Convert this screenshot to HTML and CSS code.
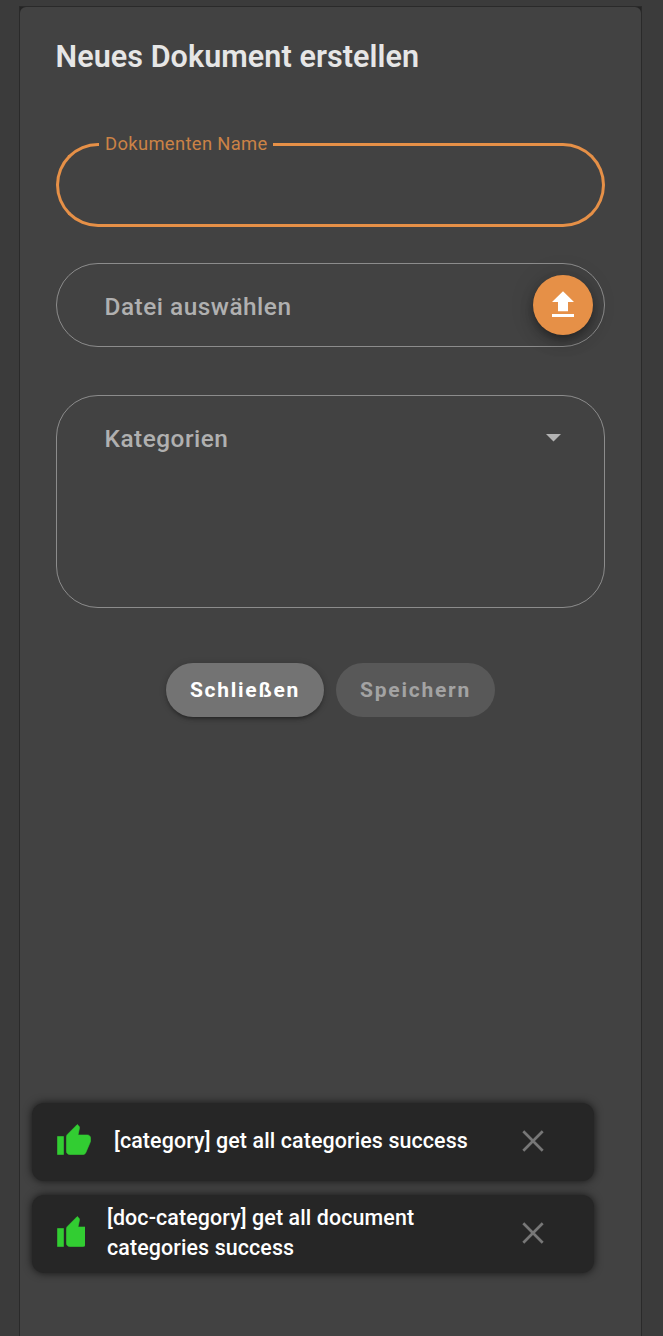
FILE: index.html
```html
<!DOCTYPE html>
<html lang="de">
<head>
<meta charset="utf-8">
<title>Neues Dokument erstellen</title>
<link rel="stylesheet" href="styles.css">
</head>
<body>
<main class="dialog">
  <div class="surface">
    <h1 class="title">Neues Dokument erstellen</h1>
    <div class="field field-focused">
      <span class="outline-start"></span>
      <label class="notch" for="name"><span class="notch-text">Dokumenten Name</span></label>
      <span class="outline-end"></span>
      <input class="name-input" id="name" type="text">
    </div>
    <div class="field field-file">
      <span class="placeholder">Datei auswählen</span>
      <button class="upload" aria-label="Hochladen">
        <svg class="upload-icon" viewBox="0 0 36 36"><path d="M18 4.3 7 15h6v9.2h10V15h6zM7 27h22v3H7z"/></svg>
      </button>
    </div>
    <div class="field field-select">
      <span class="placeholder">Kategorien</span>
      <svg class="caret" viewBox="0 0 15 8"><path d="M0 0h15L7.5 7.5z"/></svg>
    </div>
    <div class="actions">
      <button class="btn btn-close">Schließen</button>
      <button class="btn btn-save" disabled>Speichern</button>
    </div>
  </div>
</main>
<div class="toasts">
  <div class="toast">
    <svg class="thumb" viewBox="0 0 24 24" preserveAspectRatio="xMinYMid slice"><path d="M1 21h4V9H1v12zm22-11c0-1.1-.9-2-2-2h-6.31l.95-4.57.03-.32c0-.41-.17-.79-.44-1.06L14.17 1 7.59 7.59C7.22 7.95 7 8.45 7 9v10c0 1.1.9 2 2 2h9c.83 0 1.54-.5 1.84-1.22l3.02-7.05c.09-.23.14-.47.14-.73v-2z"/></svg>
    <span class="message">[category] get all categories success</span>
    <button class="dismiss" aria-label="Schließen"><svg class="cross" viewBox="0 0 22 22"><path d="M1.3 1.3 20.7 20.7M20.7 1.3 1.3 20.7"/></svg></button>
  </div>
  <div class="toast">
    <svg class="thumb thumb-narrow" viewBox="0 0 24 24" preserveAspectRatio="xMinYMid slice"><path d="M1 21h4V9H1v12zm22-11c0-1.1-.9-2-2-2h-6.31l.95-4.57.03-.32c0-.41-.17-.79-.44-1.06L14.17 1 7.59 7.59C7.22 7.95 7 8.45 7 9v10c0 1.1.9 2 2 2h9c.83 0 1.54-.5 1.84-1.22l3.02-7.05c.09-.23.14-.47.14-.73v-2z"/></svg>
    <span class="message">[doc-category] get all document categories success</span>
    <button class="dismiss" aria-label="Schließen"><svg class="cross" viewBox="0 0 22 22"><path d="M1.3 1.3 20.7 20.7M20.7 1.3 1.3 20.7"/></svg></button>
  </div>
</div>
</body>
</html>
```

FILE: styles.css
```css
* { box-sizing: border-box; }
body {
  margin: 0;
  height: 1336px;
  padding: 6px 21px 0 19px;
  overflow: hidden;
  background: #3b3b3b;
  font-family: Roboto, "Liberation Sans", sans-serif;
}
button { border: 0; padding: 0; font-family: inherit; }
svg { display: block; }
.dialog {
  height: 1340px;
  border: 1px solid #2a2a2a;
  background: #242424;
}
.surface {
  height: 100%;
  padding: 26px 36px 0;
  border-radius: 6px;
  background: #424242;
}
.title {
  margin: 0 0 62px -0.5px;
  font-size: 30.5px;
  font-weight: 600;
  line-height: 48px;
  letter-spacing: 0.08px;
  color: #e6e6e6;
  white-space: nowrap;
}
.field { display: flex; width: 549px; }
.field-focused { position: relative; height: 84px; margin-bottom: 36px; }
.outline-start {
  width: 43px;
  border: 3px solid #e69047;
  border-right: 0;
  border-radius: 42px 0 0 42px;
}
.notch {
  width: 174px;
  padding-left: 6px;
  border-bottom: 3px solid #e69047;
  color: #cb8246;
  font-size: 18.4px;
  line-height: 24px;
  letter-spacing: 0.34px;
  white-space: nowrap;
}
.notch-text { display: block; margin-top: -11px; }
.outline-end {
  flex: 1;
  border: 3px solid #e69047;
  border-left: 0;
  border-radius: 0 42px 42px 0;
}
.name-input {
  position: absolute;
  inset: 18px 48px 12px;
  width: 453px;
  border: 0;
  outline: 0;
  background: transparent;
  color: #fff;
  font: 24px Roboto, sans-serif;
}
.field-file, .field-select {
  justify-content: space-between;
  border: 1px solid #8c8c8c;
  border-radius: 42px;
}
.field-file {
  height: 84px;
  margin-bottom: 48px;
  align-items: center;
  padding: 0 11px 0 48px;
}
.field-select {
  height: 213px;
  margin-bottom: 55px;
  align-items: flex-start;
  padding: 24px 43px 0 48px;
}
.placeholder {
  margin-left: -0.5px;
  color: #b0b0b0;
  font-size: 24.4px;
  font-weight: 500;
  line-height: 36px;
  letter-spacing: 0.5px;
}
.field-file .placeholder { padding-top: 3px; }
.field-select .placeholder { padding-top: 1px; }
.upload {
  display: grid;
  place-items: center;
  width: 60px;
  height: 60px;
  border-radius: 50%;
  background: #e69047;
  box-shadow: 0 4px 8px -1px rgba(0,0,0,.3), 0 8px 15px rgba(0,0,0,.16), 0 1px 27px rgba(0,0,0,.12);
}
.upload-icon { width: 36px; height: 36px; fill: #fff; }
.caret { width: 15px; height: 8px; margin-top: 14px; fill: #b3b3b3; }
.actions { display: flex; justify-content: center; gap: 12px; }
.btn {
  height: 54px;
  border-radius: 27px;
  font-size: 21px;
  font-weight: 700;
  letter-spacing: 1.75px;
}
.btn-close {
  width: 158px;
  background: #737373;
  color: #fff;
  box-shadow: 0 4px 2px -3px rgba(0,0,0,.2), 0 3px 3px rgba(0,0,0,.14), 0 1px 7px rgba(0,0,0,.2);
}
.btn-save { width: 159px; background: #585858; color: #a3a3a3; }
.toasts {
  position: absolute;
  left: 32px;
  top: 1103px;
  display: flex;
  flex-direction: column;
  gap: 14px;
  width: 562px;
}
.toast {
  display: flex;
  align-items: center;
  height: 78px;
  padding: 0 46px 0 24px;
  border-radius: 12px;
  background: #262626;
  box-shadow: 0 0 9px rgba(0,0,0,.7);
}
.thumb {
  flex: none;
  width: 36px;
  height: 36px;
  margin-right: 22px;
  margin-top: -3px;
  fill: #32cd32;
  stroke: #32cd32;
  stroke-width: .4;
}
.thumb-narrow { width: 29px; }
.message {
  width: 370px;
  color: #fff;
  font-size: 21.4px;
  font-weight: 500;
  line-height: 30px;
  letter-spacing: 0.12px;
  padding-bottom: 2px;
}
.dismiss {
  display: grid;
  width: 22px;
  margin: -2px 4px 0 auto;
  background: transparent;
}
.cross { width: 22px; height: 22px; fill: none; stroke: #777; stroke-width: 2.7; }
```
